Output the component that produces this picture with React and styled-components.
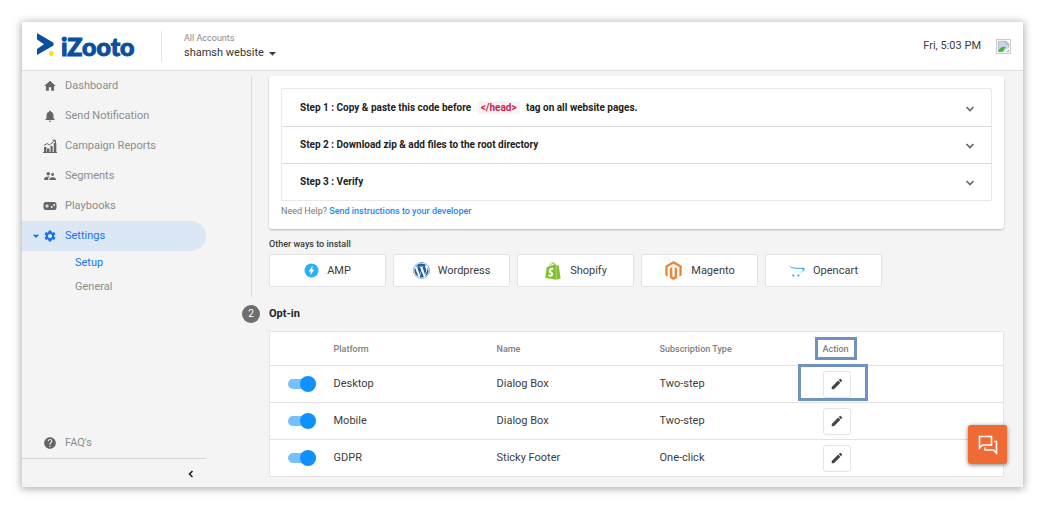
import React, { useState } from "react";
import styled, { createGlobalStyle } from "styled-components";
import {
  MdHome,
  MdNotifications,
  MdSupervisorAccount,
  MdSettings,
  MdEdit,
  MdHelp,
  MdArrowDropDown,
} from "react-icons/md";
import { FaWordpress, FaShopify, FaMagento, FaOpencart } from "react-icons/fa";

const GlobalStyle = createGlobalStyle`
  *, *::before, *::after { box-sizing: border-box; }
  body {
    margin: 0;
    background: #fff;
    color: #3c3c3c;
    font: 400 10px/16px Roboto, "Liberation Sans", sans-serif;
  }
  button, select { font: inherit; color: inherit; cursor: pointer; }
  svg { display: block; flex: none; }
`;

const Frame = styled.div`
  margin: 22px 18px 20px 22px;
  background: #f4f4f4;
  box-shadow: 0 1px 8px 1px rgba(0, 0, 0, 0.32);
`;

const Header = styled.header`
  display: flex;
  align-items: center;
  height: 49px;
  padding: 0 12px 0 14px;
  background: #fff;
  border-bottom: 1px solid #dedede;
`;

const Logo = styled.a`
  display: flex;
  align-items: center;
  gap: 7px;
  width: 125px;
  color: #0b4fa0;
  font: 900 25px/24px Lato, sans-serif;
  -webkit-text-stroke: 1px #0b4fa0;
  text-decoration: none;
`;

const Account = styled.div`
  display: flex;
  flex-direction: column;
  margin-right: auto;
  padding: 1px 0 0 22px;
  border-left: 1px solid #e4e4e4;
`;

const AccountLabel = styled.label`
  color: #8a8a8a;
  font-size: 9px;
  line-height: 13px;
`;

const AccountPicker = styled.div`
  display: flex;
  align-items: center;
  font-size: 11px;
  line-height: 14px;
`;

const AccountSelect = styled.select`
  appearance: none;
  padding: 0;
  border: 0;
  background: none;
  color: #333;
`;

const Clock = styled.time`
  margin-right: 15px;
  font-size: 11px;
`;

const Columns = styled.div`
  display: grid;
  grid-template-columns: 184px minmax(0, 1fr);
`;

const Sidebar = styled.nav`
  display: flex;
  flex-direction: column;
  color: #8c8c8c;
  font-size: 11px;
`;

const NavItem = styled.a`
  display: flex;
  align-items: center;
  height: 30px;
  padding-left: 6px;
  border-radius: 0 15px 15px 0;
  background: ${(p) => (p.$active ? "#dbe7f4" : "transparent")};
  color: ${(p) => (p.$active ? "#1a73e8" : "inherit")};
  text-decoration: none;
`;

const NavCaret = styled.span`
  display: flex;
  width: 14px;
`;

const NavIcon = styled.span`
  display: flex;
  justify-content: center;
  width: 16px;
  margin-right: 7px;
  color: ${(p) => (p.$active ? "#1a73e8" : "#666")};
`;

const SubItem = styled.a`
  padding-left: 53px;
  line-height: 24px;
  color: ${(p) => (p.$active ? "#1a73e8" : "inherit")};
  text-decoration: none;
`;

const SidebarFoot = styled.div`
  margin-top: auto;
`;

const CollapseBar = styled.div`
  display: flex;
  justify-content: flex-end;
  padding: 8px 8px 6px;
  border-top: 1px solid #d4d4dc;
`;

const PlainButton = styled.button`
  display: flex;
  padding: 0;
  border: 0;
  background: none;
  color: #222;
`;

const Main = styled.main`
  position: relative;
  padding: 5px 19px 10px 36px;
`;

const Step = styled.section`
  display: grid;
  grid-template-columns: 18px minmax(0, 1fr);
  column-gap: 9px;
`;

const Rail = styled.div`
  justify-self: center;
  width: 1px;
  margin-bottom: 7px;
  background: #dcdcdc;
`;

const StepNumber = styled.span`
  display: flex;
  align-items: center;
  justify-content: center;
  width: 18px;
  height: 18px;
  border-radius: 50%;
  background: #6e6e6e;
  color: #fff;
`;

const StepBody = styled.div`
  padding-bottom: ${(p) => (p.$last ? "0" : "18px")};
`;

const Card = styled.div`
  padding: 12px 12px 10px;
  border-radius: 3px;
  background: #fff;
  box-shadow: 0 1px 2px rgba(0, 0, 0, 0.25);
`;

const Accordion = styled.div`
  border: 1px solid #e8e8e8;
  border-radius: 2px;
`;

const AccordionRow = styled.button`
  display: flex;
  align-items: center;
  justify-content: space-between;
  width: 100%;
  height: 37px;
  padding: 0 14px 0 18px;
  border: 0;
  background: none;
  color: #222;
  font-weight: 700;
  text-align: left;

  & + & { border-top: 1px solid #d8d8d8; }
  svg { color: #666; }
`;

const Code = styled.code`
  margin: 0 4px;
  padding: 1px 3px;
  border-radius: 3px;
  background: #f9f2f4;
  color: #c7254e;
  font: inherit;
`;

const Help = styled.p`
  margin: 2px 0 0;
  color: #777;
  font-size: 9px;

  a {
    color: #1e88f5;
    font-weight: 500;
    text-decoration: none;
  }
`;

const SmallTitle = styled.h3`
  margin: 7px 0 2px;
  font-size: 9px;
  font-weight: 500;
`;

const Platforms = styled.div`
  display: flex;
  flex-wrap: wrap;
  gap: 7px;
`;

const PlatformButton = styled.button`
  display: flex;
  align-items: center;
  justify-content: center;
  gap: 8px;
  width: 117px;
  height: 33px;
  padding: 0;
  border: 1px solid #e2e2e2;
  border-radius: 2px;
  background: #fff;
  font-size: 11px;
`;

const StepTitle = styled.h2`
  margin: 0 0 8px;
  color: #222;
  font-size: 11px;
  line-height: 18px;
  font-weight: 700;
`;

const Table = styled.table`
  width: 100%;
  border: 1px solid #e6e6e6;
  border-collapse: collapse;
  table-layout: fixed;
  background: #fff;
  font-size: 11px;

  th, td {
    height: 37px;
    padding: 0;
    border-bottom: 1px solid #e2e2e2;
    text-align: left;
  }
  th {
    height: 34px;
    color: #808080;
    font-size: 9px;
    font-weight: 500;
  }
  td:first-child { padding-left: 18px; }
`;

const Col = styled.col`
  width: ${(p) => p.$width};
`;

const Switch = styled.input`
  appearance: none;
  display: flex;
  align-items: center;
  width: 28px;
  height: 10px;
  margin: 0;
  background: #76c0fd;
  border-radius: 5px;
  cursor: pointer;

  &::before {
    content: "";
    flex: none;
    width: 16px;
    height: 16px;
    margin-left: 12px;
    border-radius: 50%;
    background: #1191fc;
  }
  &:not(:checked)::before {
    margin-left: 0;
    background: #aaa;
  }
`;

const EditButton = styled.button`
  display: flex;
  align-items: center;
  justify-content: center;
  width: 28px;
  height: 27px;
  padding: 0;
  border: 1px solid #e4e4e4;
  border-radius: 3px;
  background: #fff;
  color: #444;
`;

const Marked = styled.div`
  position: relative;
  width: fit-content;

  &::after {
    content: "";
    position: absolute;
    inset: ${(p) => p.$inset};
    border: 3px solid #6f92c2;
    pointer-events: none;
  }
`;

const ChatButton = styled.button`
  position: absolute;
  right: 16px;
  bottom: 23px;
  display: flex;
  align-items: center;
  justify-content: center;
  width: 39px;
  height: 39px;
  padding: 0;
  border: 0;
  border-radius: 3px;
  background: #f06a35;
  color: #fff;
  box-shadow: 0 1px 4px rgba(0, 0, 0, 0.5);
`;

const LogoMark = () => (
  <svg width="18" height="26" viewBox="0 0 18 26" aria-hidden="true">
    <path d="M1 0 17.500 9.800V12.500L1 22V16L8 11.200 1 6.500Z" fill="#0b4fa0" />
    <circle cx="15.300" cy="20.500" r="2.400" fill="#fddb1c" />
  </svg>
);

const ReportsIcon = () => (
  <svg width="14" height="14" viewBox="0 0 14 14" fill="currentColor" aria-hidden="true">
    <path d="M1 8h2.500v5H1zM4 9.500h2.500V13H4zM7.500 7h2.200v6H7.500zM10.800 4h2.500v9h-2.500zM0 13h14v1H0z" />
    <path d="M1 6.500 4 4.500 6.500 6 12 1.500M9.500 1.200h3v3" fill="none" stroke="currentColor" />
  </svg>
);

const PlaybooksIcon = () => (
  <svg width="14" height="10" viewBox="0 0 14 10" aria-hidden="true">
    <rect x="0.500" y="1" width="13" height="8" rx="2.500" fill="currentColor" />
    <path d="M4 3.200v3.600M2.200 5h3.600" stroke="#fff" />
    <circle cx="8.800" cy="6" r="0.900" fill="#fff" />
    <circle cx="11.200" cy="4" r="0.900" fill="#fff" />
  </svg>
);

const Chevron = ({ d }) => (
  <svg width="14" height="14" viewBox="0 0 14 14" fill="none" stroke="currentColor" strokeWidth="1.600" aria-hidden="true">
    <path d={d} />
  </svg>
);

const AmpIcon = () => (
  <svg width="15" height="15" viewBox="0 0 15 15" aria-hidden="true">
    <circle cx="7.500" cy="7.500" r="7" fill="#2bb0f8" />
    <path d="M8.500 2.800 4.800 8.500h2l-.4 3.800L10.200 6.700h-2z" fill="#fff" />
  </svg>
);

const BrokenImage = () => (
  <svg width="15" height="15" viewBox="0 0 16 16" role="img" aria-label="Profile picture">
    <rect x="0.500" y="0.500" width="15" height="15" fill="#fff" stroke="#c8c8c8" />
    <path d="M2.500 2.500h8l3 3v8h-11z" fill="#c5d6f5" stroke="#b4b4b4" />
    <path d="M10.500 2.500v3h3z" fill="#fff" stroke="#a4a4a4" />
    <path d="M2.500 13.500c1-4 4-6 8-5l-3.500 5z" fill="#4fae3e" />
    <path d="m7 14.500 7.500-6v2l-5 4z" fill="#fff" />
  </svg>
);

const ChatIcon = () => (
  <svg width="20" height="20" viewBox="0 0 20 20" fill="none" stroke="currentColor" strokeWidth="1.600" aria-hidden="true">
    <path d="M1.500 13V1.500h12v8.500H4.500z" />
    <path d="M16 6.500h2.500V18l-3-3H7v-2.500" />
  </svg>
);

const NAV = [
  { label: "Dashboard", icon: <MdHome size={14} /> },
  { label: "Send Notification", icon: <MdNotifications size={14} /> },
  { label: "Campaign Reports", icon: <ReportsIcon /> },
  { label: "Segments", icon: <MdSupervisorAccount size={14} /> },
  { label: "Playbooks", icon: <PlaybooksIcon /> },
  { label: "Settings", icon: <MdSettings size={14} />, active: true },
];

const STEPS = [
  <>Step 1 : Copy &amp; paste this code before <Code>&lt;/head&gt;</Code> tag on all website pages.</>,
  "Step 2 : Download zip & add files to the root directory",
  "Step 3 : Verify",
];

const PLATFORMS = [
  { label: "AMP", icon: <AmpIcon /> },
  { label: "Wordpress", icon: <FaWordpress size={17} color="#1c5fa5" /> },
  { label: "Shopify", icon: <FaShopify size={18} color="#7fc22d" /> },
  { label: "Magento", icon: <FaMagento size={19} color="#f48233" /> },
  { label: "Opencart", icon: <FaOpencart size={16} color="#2bb0f8" /> },
];

const ROWS = [
  { platform: "Desktop", name: "Dialog Box", type: "Two-step" },
  { platform: "Mobile", name: "Dialog Box", type: "Two-step" },
  { platform: "GDPR", name: "Sticky Footer", type: "One-click" },
];

const OptInRow = ({ row, marked }) => {
  const [on, setOn] = useState(true);
  const edit = (
    <EditButton aria-label={`Edit ${row.platform}`}>
      <MdEdit size={14} />
    </EditButton>
  );
  return (
    <tr>
      <td>
        <Switch type="checkbox" aria-label={row.platform} checked={on} onChange={() => setOn(!on)} />
      </td>
      <td>{row.platform}</td>
      <td>{row.name}</td>
      <td>{row.type}</td>
      <td>{marked ? <Marked $inset="-7px -17px -3px -25px">{edit}</Marked> : edit}</td>
    </tr>
  );
};

export default function App() {
  return (
    <>
      <GlobalStyle />
      <Frame>
        <Header>
          <Logo href="#">
            <LogoMark />
            iZooto
          </Logo>
          <Account>
            <AccountLabel htmlFor="account">All Accounts</AccountLabel>
            <AccountPicker>
              <AccountSelect id="account">
                <option>shamsh website</option>
              </AccountSelect>
              <MdArrowDropDown size={17} />
            </AccountPicker>
          </Account>
          <Clock>Fri, 5:03 PM</Clock>
          <BrokenImage />
        </Header>
        <Columns>
          <Sidebar>
            {NAV.map((n) => (
              <NavItem key={n.label} href="#" $active={n.active}>
                <NavCaret>{n.active && <MdArrowDropDown size={16} />}</NavCaret>
                <NavIcon $active={n.active}>{n.icon}</NavIcon>
                {n.label}
              </NavItem>
            ))}
            <SubItem href="#" $active>Setup</SubItem>
            <SubItem href="#">General</SubItem>
            <SidebarFoot>
              <NavItem href="#">
                <NavCaret />
                <NavIcon><MdHelp size={14} /></NavIcon>
                FAQ's
              </NavItem>
              <CollapseBar>
                <PlainButton aria-label="Collapse menu"><Chevron d="M8.500 4 5.500 7l3 3" /></PlainButton>
              </CollapseBar>
            </SidebarFoot>
          </Sidebar>
          <Main>
            <Step>
              <Rail />
              <StepBody>
                <Card>
                  <Accordion>
                    {STEPS.map((s, i) => (
                      <AccordionRow key={i}>
                        <span>{s}</span>
                        <Chevron d="M3.500 6 7 9.500 10.500 6" />
                      </AccordionRow>
                    ))}
                  </Accordion>
                  <Help>
                    Need Help? <a href="#">Send instructions to your developer</a>
                  </Help>
                </Card>
                <SmallTitle>Other ways to install</SmallTitle>
                <Platforms>
                  {PLATFORMS.map((p) => (
                    <PlatformButton key={p.label}>
                      {p.icon}
                      {p.label}
                    </PlatformButton>
                  ))}
                </Platforms>
              </StepBody>
            </Step>
            <Step>
              <StepNumber>2</StepNumber>
              <StepBody $last>
                <StepTitle>Opt-in</StepTitle>
                <Table>
                  <colgroup>
                    <Col $width="64px" />
                    <Col $width="163px" />
                    <Col $width="163px" />
                    <Col $width="163px" />
                    <Col />
                  </colgroup>
                  <thead>
                    <tr>
                      <th aria-label="Enabled" />
                      <th>Platform</th>
                      <th>Name</th>
                      <th>Subscription Type</th>
                      <th><Marked $inset="-4px -8px -3px -8px">Action</Marked></th>
                    </tr>
                  </thead>
                  <tbody>
                    {ROWS.map((r, i) => (
                      <OptInRow key={r.platform} row={r} marked={i === 0} />
                    ))}
                  </tbody>
                </Table>
              </StepBody>
            </Step>
            <ChatButton aria-label="Open chat"><ChatIcon /></ChatButton>
          </Main>
        </Columns>
      </Frame>
    </>
  );
}
